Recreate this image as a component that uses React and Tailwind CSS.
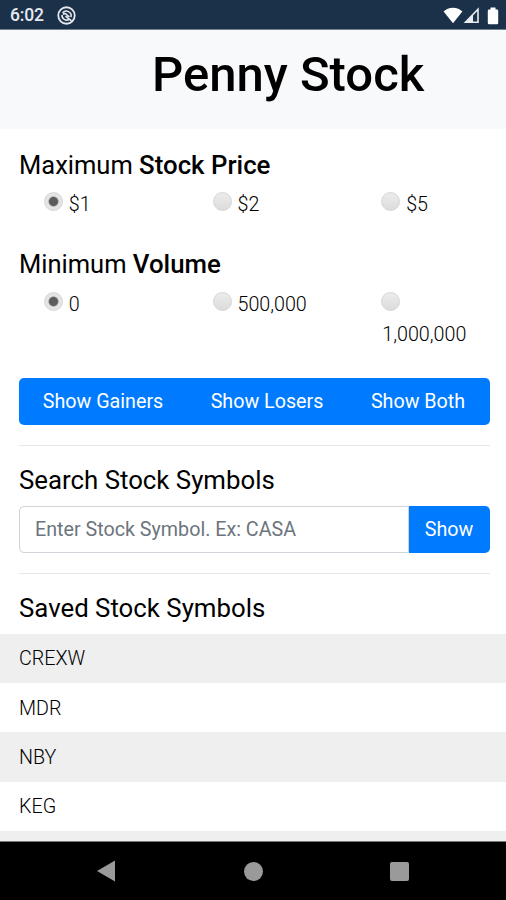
import React, { useState } from 'react';

const prices = ['$1', '$2', '$5'];
const volumes = ['0', '500,000', '1,000,000'];
const savedSymbols = ['CREXW', 'MDR', 'NBY', 'KEG'];

const StatusBar = () => (
  <div className="flex h-[30px] shrink-0 items-center justify-between border-b border-[#73808e] bg-[#1b3049] pl-[10px] pr-[7px] pt-[2px] text-white">
    <div className="flex items-center gap-[13px]">
      <span className="pt-px text-[17.500px] font-medium leading-none tracking-[-0.2px] text-[#e6e9ee]">6:02</span>
      <svg width="19" height="19" viewBox="0 0 18 18" fill="none" stroke="#e6e9ee">
        <circle cx="9" cy="9" r="7.8" strokeWidth="1.7" />
        <path d="M5.300 6.500A4.600 4.600 0 0 1 13.300 10.500M11.500 12.800A4.600 4.600 0 0 1 4.700 8.500" strokeWidth="1.500" />
        <path d="M5.500 7.800c1.800-1 3.200-.6 3.900.7s1.500 1.500 2.600 1.200M8 9.600l5.800 4.600" strokeWidth="1.500" />
      </svg>
    </div>
    <div className="flex items-center">
      <svg width="20" height="17" viewBox="0 0 20 17" fill="#fff">
        <path d="M10 16.2 .6 4.6C3 2 6.200 .7 10 .7s7 1.300 9.400 3.900z" />
      </svg>
      <svg width="17" height="17" viewBox="0 0 17 17">
        <path d="M15 2.300V15.300H2.500z" fill="none" stroke="#e9ecf0" strokeWidth="1.600" />
        <path d="M10 7.500V15.500H3z" fill="#e9ecf0" />
      </svg>
      <svg className="ml-[7px]" width="12" height="18" viewBox="0 0 12 18" fill="#fff">
        <path d="M3.500 .5h5v2H10a1.200 1.200 0 0 1 1.200 1.200V16A1.200 1.200 0 0 1 10 17.200H2A1.200 1.200 0 0 1 .8 16V3.700A1.200 1.200 0 0 1 2 2.500h1.500z" />
      </svg>
    </div>
  </div>
);

const RadioRow = ({ name, options, value, onChange }) => (
  <div className="grid grid-cols-3 text-[19.700px] font-light leading-[30px] text-black">
    {options.map((option) => (
      <label key={option} className="pl-[44px] pr-[20px]">
        <input
          type="radio"
          name={name}
          checked={value === option}
          onChange={() => onChange(option)}
          className="inline-block size-[19px] appearance-none rounded-full border border-[#d6d6d6] bg-linear-to-b from-[#ececec] to-[#dcdcdc] align-[0px] checked:bg-[radial-gradient(circle,#5c5c5c_4px,#e4e4e4_5.500px)]"
        />
        {' '}
        <span className="ml-px">{option}</span>
      </label>
    ))}
  </div>
);

const App = () => {
  const [price, setPrice] = useState('$1');
  const [volume, setVolume] = useState('0');
  const [symbol, setSymbol] = useState('');

  return (
    <div className="flex h-[900px] w-[506px] flex-col overflow-hidden bg-white font-['Roboto',sans-serif] text-black">
      <StatusBar />

      <header className="h-[99px] shrink-0 bg-[#f8f9fb] pl-[152px] pt-[15px]">
        <h1 className="text-[49px] font-medium leading-[60px]">Penny Stock</h1>
      </header>

      <main className="min-h-0 flex-1 overflow-hidden">
        <section className="h-[100px] pt-[20px]">
          <h2 className="px-[19px] text-[25.500px] leading-[32px]">
            Maximum <b className="text-[25.800px] font-medium">Stock Price</b>
          </h2>
          <div className="pt-[9px]">
            <RadioRow name="price" options={prices} value={price} onChange={setPrice} />
          </div>
        </section>

        <section className="h-[149px] pt-[19px]">
          <h2 className="px-[19px] text-[25.500px] leading-[32px]">
            Minimum <b className="text-[25.800px] font-medium">Volume</b>
          </h2>
          <div className="pt-[10px]">
            <RadioRow name="volume" options={volumes} value={volume} onChange={setVolume} />
          </div>
        </section>

        <div className="mx-[19px] flex h-[47px] w-[471px] rounded-[5px] bg-[#007bff] pt-px text-[19.700px] text-white">
          <button className="w-[168px]">Show Gainers</button>
          <button className="w-[160px]">Show Losers</button>
          <button className="w-[142px]">Show Both</button>
        </div>

        <hr className="mx-[19px] mt-[20px] w-[471px] border-[#e8e8e8]" />

        <h2 className="mt-[18px] px-[19px] text-[25.800px] leading-[32px]">Search Stock Symbols</h2>
        <div className="mx-[19px] mt-[10px] flex h-[47px] w-[471px]">
          <input
            value={symbol}
            onChange={(e) => setSymbol(e.target.value)}
            placeholder="Enter Stock Symbol. Ex: CASA"
            className="w-[390px] rounded-l-[5px] border border-[#ced4da] px-[15px] pt-px text-[19.700px] placeholder:text-[#6c757d]"
          />
          <button className="w-[81px] rounded-r-[5px] bg-[#007bff] pr-px pt-px text-[19.700px] text-white">Show</button>
        </div>

        <hr className="mx-[19px] mt-[20px] w-[471px] border-[#e8e8e8]" />

        <h2 className="mt-[18px] px-[19px] text-[25.800px] leading-[32px]">Saved Stock Symbols</h2>
        <ul className="mt-[10px] text-[19.700px] font-light">
          {savedSymbols.map((s) => (
            <li key={s} className="flex h-[49.200px] items-center px-[19px] pt-px odd:bg-[#efefef]">
              {s}
            </li>
          ))}
          <li className="h-[49px] bg-[#efefef]"></li>
        </ul>
      </main>

      <nav className="flex h-[59px] shrink-0 items-center justify-between border-t border-[#777] bg-black px-[96px]">
        <svg width="20" height="22" viewBox="0 0 20 22" fill="#9a9a9a">
          <path d="M19 .5v21L1 11z" />
        </svg>
        <span className="size-[19px] rounded-full bg-[#9a9a9a]"></span>
        <span className="mr-px size-[19px] rounded-[2px] bg-[#9a9a9a]"></span>
      </nav>
    </div>
  );
};

export default App;
